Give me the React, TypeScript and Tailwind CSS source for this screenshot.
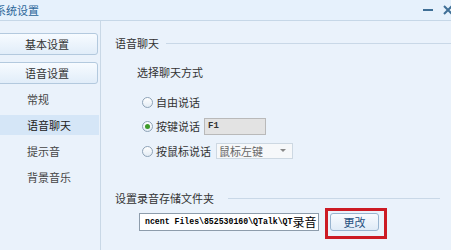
import React from 'react';

const cjk = { fontFamily: '"Noto Sans CJK SC", "Noto Sans", sans-serif' };

const Radio = ({ checked }: { checked?: boolean }) => (
  <span className="flex h-[11px] w-[11px] shrink-0 items-center justify-center rounded-full border border-[#8ea3b7] bg-gradient-to-b from-[#ffffff] to-[#e3ecf4]">
    {checked && <span className="h-[5px] w-[5px] rounded-full bg-[#3e9b2a]" />}
  </span>
);

const SideButton = ({ label }: { label: string }) => (
  <div className="ml-[-4px] flex h-[22px] w-[102px] items-center justify-center rounded-[3px] border border-[#b3c9de] bg-gradient-to-b from-[#f7fbff] to-[#e1edf9] text-[11px] text-[#333]">
    {label}
  </div>
);

const App = () => {
  const items = ['常规', '语音聊天', '提示音', '背景音乐'];

  return (
    <div style={cjk} className="flex h-[250px] w-[451px] flex-col overflow-hidden bg-[#eaf2fb] text-[#333]">
      {/* title bar */}
      <div className="flex h-[21px] shrink-0 items-center border-b border-[#c6d7e7] bg-[#e6f1fc]">
        <span className="ml-[-5px] text-[11px] leading-none text-[#2c6699]">系统设置</span>
        <div className="ml-auto flex items-center">
          <span className="mr-[10px] h-[2px] w-[10px] bg-[#3f6f96]" />
          <svg width="10" height="10" viewBox="0 0 10 10" className="mr-[-2px]">
            <path d="M1 1 L9 9 M9 1 L1 9" stroke="#3f6f96" strokeWidth="2" />
          </svg>
        </div>
      </div>

      <div className="flex flex-1">
        {/* left nav */}
        <div className="flex w-[101px] shrink-0 flex-col border-r border-[#c9d8e6] pt-[12px]">
          <SideButton label="基本设置" />
          <div className="h-[7px]" />
          <SideButton label="语音设置" />
          <div className="mt-[5px] flex flex-col gap-[6px]">
            {items.map((t) => (
              <div
                key={t}
                className={
                  'flex h-[20px] w-[99px] items-center pl-[27px] text-[11px] ' +
                  (t === '语音聊天' ? 'bg-[#d5e6f7] text-[#222]' : 'text-[#444]')
                }
              >
                {t}
              </div>
            ))}
          </div>
        </div>

        {/* right panel */}
        <div className="flex flex-1 flex-col pl-[14px]">
          <div className="mt-[15px] flex h-[14px] items-center">
            <span className="text-[11px] leading-none text-[#333]">语音聊天</span>
            <span className="ml-[7px] h-px flex-1 bg-[#c9d8e7]" />
          </div>

          <div className="mt-[15px] flex h-[14px] items-center pl-[22px] text-[11px] leading-none">选择聊天方式</div>

          <div className="mt-[14px] flex flex-col pl-[27px] text-[11px] leading-none">
            <div className="flex h-[18px] items-center">
              <Radio />
              <span className="ml-[3px]">自由说话</span>
            </div>
            <div className="mt-[6px] flex h-[18px] items-center">
              <Radio checked />
              <span className="ml-[3px] w-[48px]">按键说话</span>
              <div className="flex h-[17px] w-[62px] items-center border border-[#b9b9b9] bg-[#e3e3e3] pl-[3px] text-[9px] font-bold" style={{ fontFamily: '"Liberation Mono", monospace' }}>
                F1
              </div>
            </div>
            <div className="mt-[7px] flex h-[18px] items-center">
              <Radio />
              <span className="ml-[3px]">按鼠标说话</span>
              <div className="ml-[5px] flex h-[16px] w-[77px] items-center border border-[#cdd8e2] bg-[#f6f8fa] pl-[2px] text-[#666]">
                <span>鼠标左键</span>
                <svg width="6" height="4" viewBox="0 0 6 4" className="ml-auto mr-[6px]">
                  <path d="M0 0 L6 0 L3 3 Z" fill="#888" />
                </svg>
              </div>
            </div>
          </div>

          <div className="mt-[31px] flex h-[14px] items-center pr-[11px]">
            <span className="text-[11px] leading-none">设置录音存储文件夹</span>
            <span className="ml-[14px] h-px flex-1 bg-[#c9d8e7]" />
          </div>

          <div className="mt-[3px] flex items-start pl-[24px]">
            <div className="mt-[5px] flex h-[18px] w-[180px] items-center overflow-hidden border border-[#8d9cab] bg-white pl-[5px] text-black">
              <span className="whitespace-pre text-[8.2px] font-bold leading-none" style={{ fontFamily: '"Liberation Mono", monospace' }}>
                {'ncent Files\\852530160\\QTalk\\QT'}
              </span>
              <span className="text-[12px] leading-none">录音</span>
            </div>
            <div className="ml-[6px] h-[31px] w-[62px] border-[3px] border-[#cc1b24] pl-[2px] pt-[2px]">
              <div className="flex h-[18px] w-[49px] items-center justify-center rounded-[3px] border border-[#98b4cf] bg-gradient-to-b from-[#f8fbff] to-[#dfebf7] text-[11px] leading-none text-[#1f4f7e]">
                更改
              </div>
            </div>
          </div>
        </div>
      </div>
    </div>
  );
};

export default App;
